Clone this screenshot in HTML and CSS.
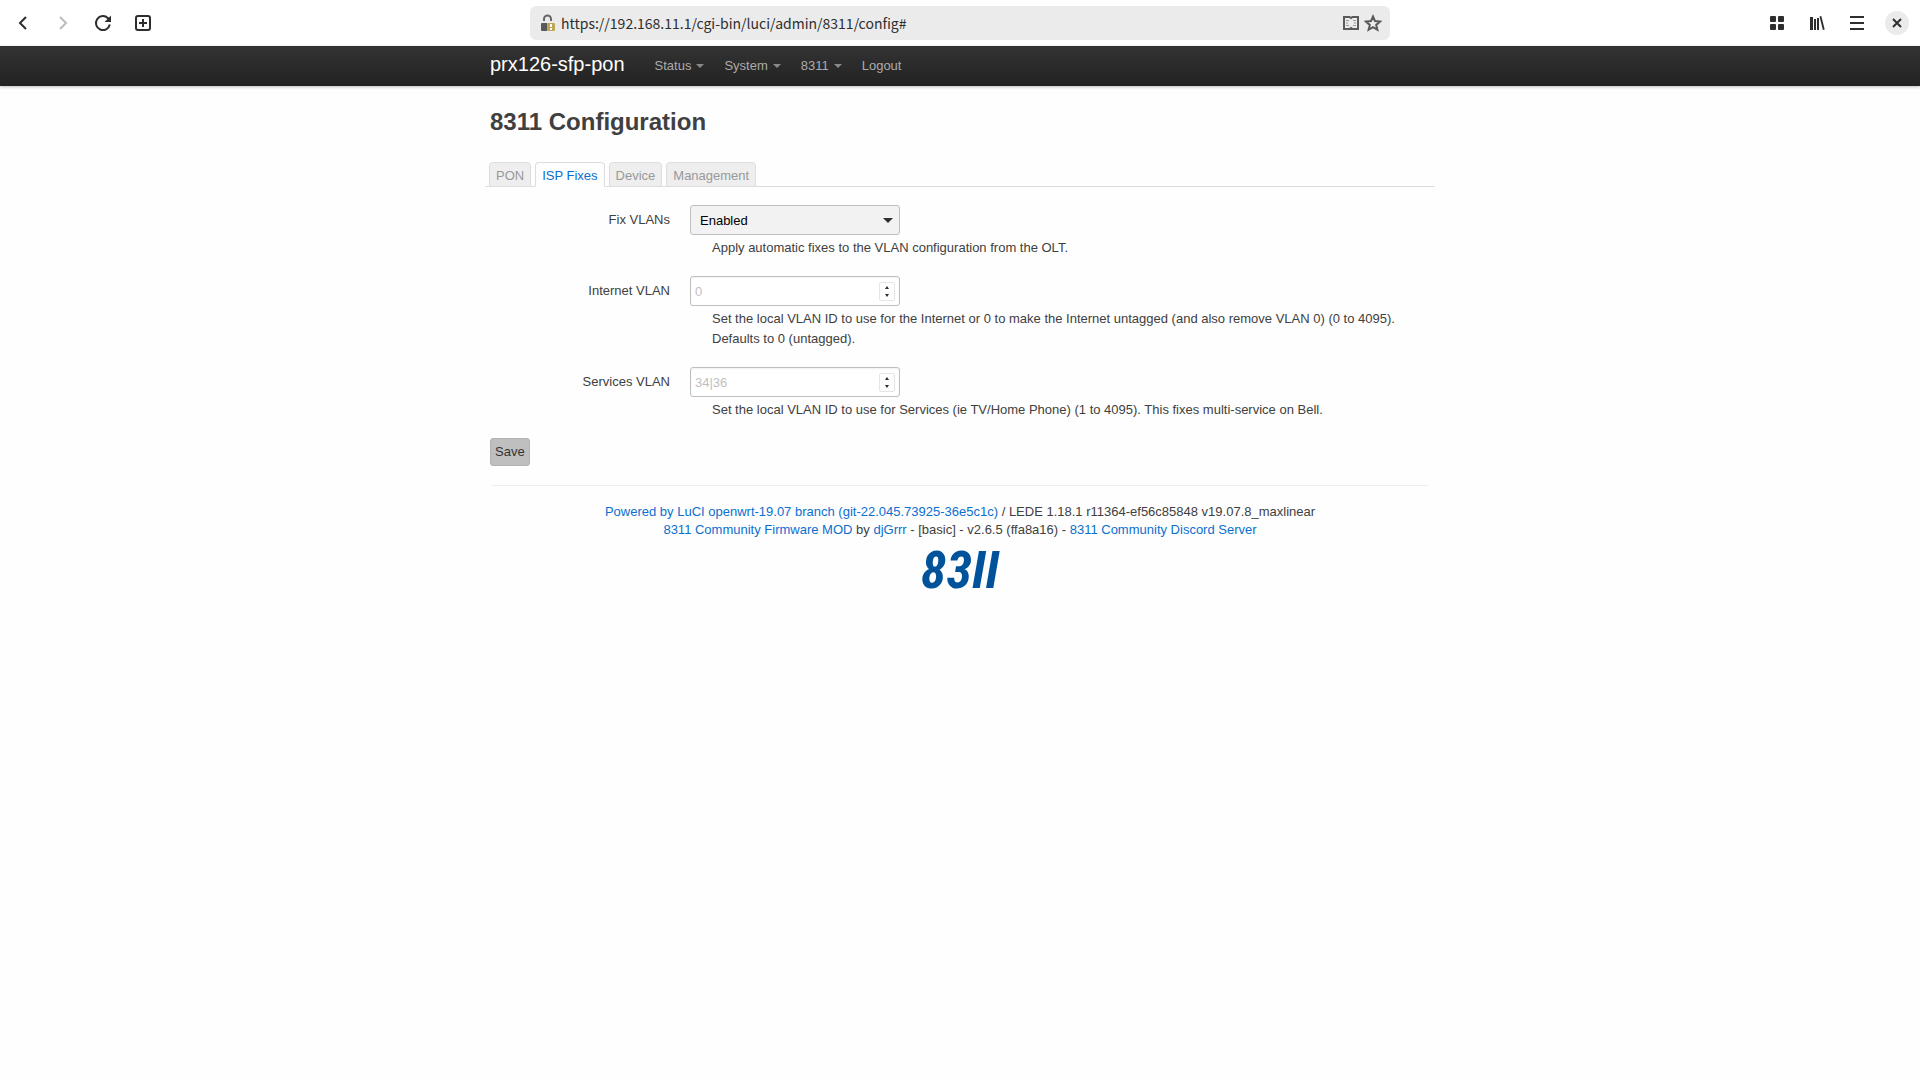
FILE: index.html
```html
<!DOCTYPE html>
<html lang="en">
<head>
<meta charset="utf-8">
<meta name="viewport" content="width=device-width, initial-scale=1">
<title>prx126-sfp-pon - 8311 Configuration</title>
<link rel="stylesheet" href="styles.css">
</head>
<body>
<div class="toolbar">
  <div class="tools">
    <button type="button" class="tool" aria-label="Back"><svg viewBox="0 0 20 20"><path d="M13 4 7 10l6 6"/></svg></button>
    <button type="button" class="tool" aria-label="Forward" disabled><svg viewBox="0 0 20 20"><path d="m7 4 6 6-6 6"/></svg></button>
    <button type="button" class="tool" aria-label="Reload"><svg viewBox="0 0 20 20"><path d="M16.8 11.5A7 7 0 1 1 15 5.2l1.500 2"/><path class="solid" d="M18 2.500V9h-6.500l2.300-2.200L16 4.500z"/></svg></button>
    <button type="button" class="tool" aria-label="New tab"><svg viewBox="0 0 20 20"><rect x="3" y="3" width="14" height="14" rx="2"/><path d="M10 6v8M6 10h8"/></svg></button>
  </div>
  <div class="address">
    <svg class="lock" viewBox="0 0 16 18" aria-hidden="true">
      <path class="shackle" d="M4 7V5a3.500 3.500 0 0 1 7 0v2"/>
      <path class="lock-body" d="M2 9h5v8H2a1 1 0 0 1-1-1v-6a1 1 0 0 1 1-1z"/>
      <rect class="warn" x="7" y="9" width="8" height="8" rx="1"/>
      <path class="mark" d="M11 10v3M11 14v2"/>
    </svg>
    <input class="url" type="text" aria-label="Address" value="https://192.168.11.1/cgi-bin/luci/admin/8311/config#">
    <button type="button" class="mini" aria-label="Reader mode"><svg viewBox="0 0 18 18"><path d="M2 3h5.500L9 4l1.500-1H16v12h-5.500L9 14l-1.500 1H2z"/><path class="thin" d="M4 6.500h3M4 9h2M4 11.500h3M11 6.500h3M12 9h2M11 11.500h3"/></svg></button>
    <button type="button" class="mini" aria-label="Bookmark"><svg viewBox="0 0 18 18"><path d="m9 2.500 2 4.600 5 .5-3.800 3.300 1.200 4.900L9 13.200l-4.400 2.600 1.200-4.900L2 7.600l5-.5z"/></svg></button>
  </div>
  <div class="tools end">
    <button type="button" class="tool" aria-label="Tab overview"><svg class="filled" viewBox="0 0 20 20"><rect x="3" y="3" width="6" height="6" rx="1"/><rect x="11" y="3" width="6" height="6" rx="1"/><rect x="3" y="11" width="6" height="6" rx="1"/><rect x="11" y="11" width="6" height="6" rx="1"/></svg></button>
    <button type="button" class="tool" aria-label="Library"><svg class="filled" viewBox="0 0 20 20"><path d="M3 4h3v13H3zM7 6h2v11H7zM10 5h2v12h-2zM12.500 3.500l1.800-.5 3.400 13.500-1.800.5z"/></svg></button>
    <button type="button" class="tool" aria-label="Menu"><svg viewBox="0 0 20 20"><path d="M3 4h14M3 10h14M3 16h14"/></svg></button>
    <button type="button" class="tool close" aria-label="Close"><svg viewBox="0 0 20 20"><path d="m6 6 8 8M14 6l-8 8"/></svg></button>
  </div>
</div>

<header class="navbar">
  <div class="container nav-inner">
    <a class="brand" href="#">prx126-sfp-pon</a>
    <nav class="nav">
      <a class="dropdown" href="#">Status</a>
      <a class="dropdown" href="#">System</a>
      <a class="dropdown" href="#">8311</a>
      <a href="#">Logout</a>
    </nav>
  </div>
</header>

<main class="container">
  <h2>8311 Configuration</h2>
  <nav class="tabs">
    <a href="#">PON</a>
    <a class="active" href="#">ISP Fixes</a>
    <a href="#">Device</a>
    <a href="#">Management</a>
  </nav>
  <form>
    <div class="row">
      <label for="fix-vlans">Fix VLANs</label>
      <div class="field">
        <div class="control select"><select id="fix-vlans"><option>Enabled</option><option>Disabled</option></select></div>
        <p class="hint">Apply automatic fixes to the VLAN configuration from the OLT.</p>
      </div>
    </div>
    <div class="row">
      <label for="internet-vlan">Internet VLAN</label>
      <div class="field">
        <div class="control"><input id="internet-vlan" type="number" min="0" max="4095" placeholder="0"><span class="spinner"></span></div>
        <p class="hint">Set the local VLAN ID to use for the Internet or 0 to make the Internet untagged (and also remove VLAN 0) (0 to 4095). Defaults to 0 (untagged).</p>
      </div>
    </div>
    <div class="row">
      <label for="services-vlan">Services VLAN</label>
      <div class="field">
        <div class="control"><input id="services-vlan" type="number" min="1" max="4095" placeholder="34|36"><span class="spinner"></span></div>
        <p class="hint">Set the local VLAN ID to use for Services (ie TV/Home Phone) (1 to 4095). This fixes multi-service on Bell.</p>
      </div>
    </div>
    <button class="save" type="submit">Save</button>
  </form>
  <footer>
    <div><a href="#">Powered by LuCI openwrt-19.07 branch (git-22.045.73925-36e5c1c)</a> / LEDE 1.18.1 r11364-ef56c85848 v19.07.8_maxlinear</div>
    <div><a href="#">8311 Community Firmware MOD</a> by <a href="#">djGrrr</a> - [basic] - v2.6.5 (ffa8a16) - <a href="#">8311 Community Discord Server</a></div>
    <div class="logo" role="img" aria-label="8311">83II</div>
  </footer>
</main>
</body>
</html>
```
FILE: styles.css
```css
* { box-sizing: border-box; }

body {
  margin: 0;
  background: #fefefe;
  color: #404040;
  font: 13px/18px "Liberation Sans", Arial, sans-serif;
}

a { color: #0b6fd0; text-decoration: none; }

.container { width: 100%; max-width: 940px; margin: 0 auto; }

/* Browser toolbar */
.toolbar {
  display: grid;
  grid-template-columns: 1fr minmax(0, 860px) 1fr;
  align-items: center;
  height: 46px;
  background: #fff;
}
.tools { display: flex; gap: 16px; padding: 0 11px; }
.tools.end { justify-content: flex-end; }
.tool, .mini {
  display: flex;
  align-items: center;
  justify-content: center;
  padding: 0;
  border: 0;
  background: none;
  color: #2e2e2e;
}
.tool { width: 24px; height: 24px; border-radius: 12px; }
.tool:disabled { color: #bdbdbd; }
.tool svg { width: 20px; height: 20px; }
.tool svg, .mini svg { fill: none; stroke: currentColor; stroke-width: 2; }
.tool .filled, .tool .solid { fill: currentColor; stroke: none; }
.tool.close { background: #ebebeb; }
.tool.close svg { stroke-width: 2; }
.address {
  display: flex;
  align-items: center;
  gap: 4px;
  height: 34px;
  padding: 0 8px 0 10px;
  border-radius: 6px;
  background: #ebebeb;
}
.url {
  flex: 1;
  min-width: 0;
  padding: 0 1px;
  border: 0;
  background: none;
  color: #2e2e2e;
  font: 14px/22px "Noto Sans CJK SC", "Noto Sans", sans-serif;
}
.mini { color: #5a5a5a; width: 18px; }
.mini svg { width: 18px; height: 18px; }
.mini .thin { stroke: #999; stroke-width: 1; }
.lock { width: 16px; height: 18px; }
.shackle { fill: none; stroke: #666; stroke-width: 2; }
.lock-body { fill: #5a5a5a; }
.warn { fill: #bfa75a; }
.mark { stroke: #fff; stroke-width: 2; }

/* Site navigation */
.navbar {
  height: 40px;
  background: linear-gradient(#333, #222);
  box-shadow: 0 1px 3px rgba(0, 0, 0, .25);
}
.nav-inner { display: flex; align-items: center; height: 40px; }
.brand { padding: 0 20px 4px 0; color: #fff; font-size: 20px; line-height: 24px; }
.nav { display: flex; }
.nav a { display: flex; align-items: center; padding: 0 10px; color: #ababab; }
.dropdown::after {
  content: "";
  margin-left: 5px;
  border: 4px solid transparent;
  border-top-color: #8a8a8a;
  border-bottom: 0;
}

h2 { margin: 18px 0; font-size: 24px; line-height: 36px; }

.tabs {
  display: flex;
  gap: 4px;
  margin: 0 -5px 18px;
  padding: 4px 4px 0;
  border-bottom: 1px solid #ddd;
}
.tabs a {
  margin-bottom: -1px;
  padding: 4px 6px 1px;
  border: 1px solid #ddd;
  border-radius: 4px 4px 0 0;
  background: #eee;
  color: #999;
}
.tabs .active { border-bottom-color: #fefefe; background: #fefefe; color: #0b6fd0; }

/* Form */
.row { display: flex; gap: 20px; margin-bottom: 18px; }
.row label { width: 180px; line-height: 30px; text-align: right; }
.field { flex: 1; min-width: 0; }
.control { position: relative; width: 210px; }
.control input, .control select {
  display: block;
  width: 100%;
  height: 30px;
  padding: 4px;
  border: 1px solid #bfbfbf;
  border-radius: 3px;
  background: #fff;
  font: 13px/20px "Liberation Sans", Arial, sans-serif;
  appearance: none;
}
.control input { box-shadow: inset 0 1px 2px rgba(0, 0, 0, .06); appearance: textfield; }
.control input::placeholder { color: #bfbfbf; }
.control select { padding: 5px 9px 3px; background: #f2f2f2; color: #000; }
.select::after {
  content: "";
  position: absolute;
  top: 13px;
  right: 7px;
  border: 5px solid transparent;
  border-top-color: #2e2e2e;
  border-bottom: 0;
}
.spinner {
  position: absolute;
  top: 6px;
  right: 5px;
  display: flex;
  flex-direction: column;
  align-items: center;
  justify-content: space-between;
  width: 16px;
  height: 19px;
  padding: 3px 0;
  border: 1px solid #e6e6e6;
  border-radius: 2px;
  pointer-events: none;
}
.spinner::before, .spinner::after { content: ""; border: 2px solid transparent; }
.spinner::before { border-top: 0; border-bottom: 3px solid #2e2e2e; }
.spinner::after { border-bottom: 0; border-top: 3px solid #2e2e2e; }
.hint { margin: 3px 0 0; padding: 0 22px; line-height: 20px; }

.save {
  display: block;
  height: 28px;
  padding: 0 4px;
  border: 1px solid #b3b3b3;
  border-radius: 3px;
  background: #bfbfbf;
  color: #333;
  font: 13px/18px "Liberation Sans", Arial, sans-serif;
}

footer {
  margin: 19px 2px 0;
  padding-top: 17px;
  border-top: 1px solid #eee;
  text-align: center;
}
.logo {
  margin-top: 8px;
  color: #00539b;
  font: italic bold 52px/48px "Roboto Condensed", "Liberation Sans", sans-serif;
}
```
